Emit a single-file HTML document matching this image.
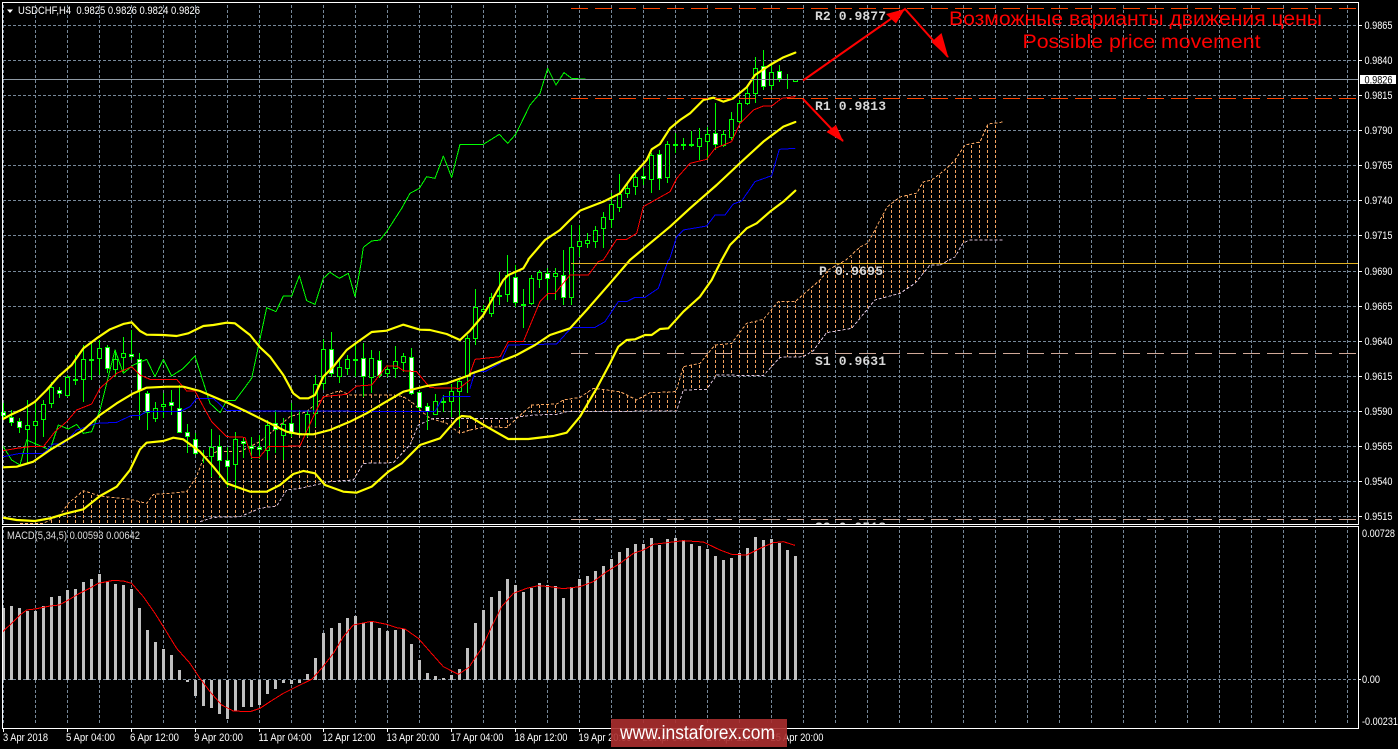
<!DOCTYPE html>
<html><head><meta charset="utf-8"><title>USDCHF,H4</title>
<style>html,body{margin:0;padding:0;background:#000;width:1398px;height:749px;overflow:hidden}svg{display:block}text{font-family:"Liberation Sans",sans-serif}.m{font-family:"Liberation Mono",monospace;font-size:13px;font-weight:bold;fill:#d8d8d8}.a{font-size:11px;fill:#fff}</style></head>
<body>
<svg width="1398" height="749" viewBox="0 0 1398 749" xmlns="http://www.w3.org/2000/svg">
<defs>
<pattern id="vg" width="32" height="5" patternUnits="userSpaceOnUse"><rect x="3" width="1" height="3" fill="#778899"/></pattern>
<pattern id="ht" width="8" height="5" patternUnits="userSpaceOnUse"><rect x="3" width="1" height="3" fill="#f4a460"/></pattern>
<clipPath id="cloud">
<polygon transform="translate(0 260) scale(.33333)" points="60,790 130,790 180,765 205,730 250,692 300,708 390,718 440,730 460,703 510,700 560,695 590,650 610,595 650,575 720,575 780,545 810,520 870,470 920,455 980,405 1020,392 1050,405 1100,405 1180,405 1210,410 1240,430 1260,450 1290,475 1340,490 1380,520 1410,510 1410,475 1360,475 1300,475 1255,495 1230,555 1180,608 1090,610 1060,660 990,665 900,685 860,690 830,738 780,745 720,770 640,772 600,785 560,800 60,800"/>
<polygon transform="translate(470 260) scale(.33333)" points="0,510 50,500 110,503 135,480 185,435 260,432 280,420 330,412 370,385 450,395 500,420 540,398 618,395 640,320 690,310 735,255 785,250 830,190 880,178 925,125 975,125 1050,60 1075,30 1130,10 1410,10 1410,15 1380,15 1335,70 1290,100 1215,120 1145,205 1070,218 1030,272 1000,290 930,292 880,347 740,345 710,388 640,390 620,453 290,455 260,463 190,465 150,470 120,475 0,475"/>
<polygon points="846,263 860,247 868,243 887,207 900,197 917,193 923,182 932,180 947,168 955,160 965,145 980,142 988,124 1003,122 1003,240 970,240 963,243 955,257 940,265 846,265"/>
</clipPath>
<clipPath id="mainclip"><rect x="3" y="3" width="1355" height="521"/></clipPath>
</defs>
<rect width="1398" height="749" fill="#000"/>
<rect x="3" y="3" width="1355" height="521" fill="url(#vg)"/>
<rect x="3" y="527" width="1355" height="198" fill="url(#vg)"/>
<g stroke="#778899" stroke-width="1" stroke-dasharray="3 2" fill="none" shape-rendering="crispEdges">
<path d="M3 25.5H1358M3 60.5H1358M3 95.5H1358M3 130.5H1358M3 165.5H1358M3 200.5H1358M3 235.5H1358M3 271.5H1358M3 306.5H1358M3 341.5H1358M3 376.5H1358M3 411.5H1358M3 446.5H1358M3 481.5H1358M3 516.5H1358M3 679.5H1358"/>
</g>
<rect x="0" y="3" width="1010" height="521" fill="url(#ht)" clip-path="url(#cloud)"/>
<g fill="none" stroke-width="3" stroke-dasharray="9 6" clip-path="url(#mainclip)" shape-rendering="crispEdges">
<g transform="translate(0 260) scale(.33333)">
<polyline stroke="#f4a460" points="60,790 130,790 180,765 205,730 250,692 300,708 390,718 440,730 460,703 510,700 560,695 590,650 610,595 650,575 720,575 780,545 810,520 870,470 920,455 980,405 1020,392 1050,405 1100,405 1180,405 1210,410 1240,430 1260,450 1290,475 1340,490 1380,520 1410,510"/>
<polyline stroke="#d8bfd8" points="600,785 640,772 720,770 780,745 830,738 860,690 900,685 990,665 1060,660 1090,610 1180,608 1230,555 1255,495 1300,475 1360,475 1410,475"/>
</g>
<g transform="translate(470 260) scale(.33333)">
<polyline stroke="#f4a460" points="0,510 50,500 110,503 135,480 185,435 260,432 280,420 330,412 370,385 450,395 500,420 540,398 618,395 640,320 690,310 735,255 785,250 830,190 880,178 925,125 975,125 1050,60 1075,30"/>
<polyline stroke="#d8bfd8" points="0,475 120,475 150,470 190,465 260,463 290,455 620,453 640,390 710,388 740,345 880,347 930,292 1000,290 1030,272 1070,218 1145,205 1215,120 1290,100 1335,70 1380,15 1410,15"/>
</g>
<polyline stroke-width="1" stroke-dasharray="3 2" stroke="#f4a460" points="828,270 846,260 860,247 868,243 887,207 900,197 917,193 923,182 932,180 947,168 955,160 965,145 980,142 988,124 1003,122"/>
<polyline stroke-width="1" stroke-dasharray="3 2" stroke="#d8bfd8" points="940,265 955,257 963,243 970,240 1003,240"/>
</g>
<path fill="none" stroke="#00ff00" stroke-width="1" d="M3.5 403V420M11.5 410V426M19.5 418V433M27.5 400V463M35.5 403V445M43.5 400V437M51.5 382V408M59.5 387V398M67.5 375V397M75.5 355V385M83.5 345V402M91.5 343V380M99.5 340V375M107.5 345V373M115.5 350V377M123.5 337V372M131.5 330V360M139.5 353V420M147.5 391V430M155.5 402V422M163.5 393V418M171.5 390V415M179.5 385V433M187.5 424V453M195.5 433V455M203.5 450V463M211.5 429V477M219.5 435V478M227.5 447V487M235.5 432V490M243.5 437V458M251.5 437V459M259.5 435V459M267.5 420V460M275.5 410V453M283.5 418V460M291.5 403V437M299.5 410V435M307.5 410V437M315.5 375V427M323.5 339V390M331.5 332V377M339.5 358V383M347.5 355V375M355.5 343V377M363.5 343V397M371.5 350V393M379.5 351V378M387.5 365V377M395.5 346V378M403.5 353V372M411.5 348V395M419.5 391V410M427.5 403V430M435.5 394V415M443.5 395V412M451.5 384V417M459.5 380V427M467.5 335V393M475.5 289V345M483.5 305V315M491.5 293V317M499.5 272V305M507.5 255V302M515.5 265V307M523.5 289V328M531.5 275V305M539.5 270V288M547.5 268V300M555.5 268V300M563.5 250V305M571.5 225V305M579.5 225V257M587.5 233V248M595.5 226V248M603.5 212V248M611.5 193V228M619.5 174V212M627.5 183V198M635.5 170V195M643.5 168V185M651.5 153V193M659.5 150V190M667.5 141V183M675.5 133V153M683.5 138V150M691.5 131V147M699.5 128V160M707.5 127V160M715.5 103V150M723.5 130V147M731.5 112V140M739.5 100V125M747.5 88V105M755.5 57V103M763.5 50V90M771.5 65V90M779.5 65V82M787.5 74V89M795.5 79V82"/>
<path fill="#000" stroke="#00ff00" stroke-width="1" d="M25.5 425.5h4v4h-4zM33.5 421.5h4v4h-4zM41.5 404.5h4v15h-4zM49.5 387.5h4v16h-4zM65.5 377.5h4v18h-4zM73.5 379.5h4v1h-4zM81.5 359.5h4v20h-4zM89.5 359.5h4v1h-4zM97.5 348.5h4v10h-4zM113.5 359.5h4v10h-4zM121.5 353.5h4v4h-4zM153.5 408.5h4v10h-4zM161.5 404.5h4v2h-4zM209.5 447.5h4v9h-4zM233.5 439.5h4v25h-4zM265.5 425.5h4v25h-4zM281.5 424.5h4v11h-4zM297.5 433.5h4v1h-4zM305.5 414.5h4v19h-4zM313.5 384.5h4v29h-4zM321.5 349.5h4v34h-4zM337.5 367.5h4v9h-4zM345.5 359.5h4v9h-4zM353.5 359.5h4v1h-4zM369.5 358.5h4v19h-4zM385.5 369.5h4v4h-4zM393.5 361.5h4v7h-4zM401.5 356.5h4v6h-4zM433.5 401.5h4v13h-4zM441.5 401.5h4v1h-4zM449.5 391.5h4v10h-4zM457.5 381.5h4v10h-4zM465.5 338.5h4v37h-4zM473.5 307.5h4v31h-4zM481.5 309.5h4v2h-4zM489.5 297.5h4v16h-4zM497.5 295.5h4v1h-4zM505.5 275.5h4v19h-4zM521.5 304.5h4v1h-4zM529.5 278.5h4v25h-4zM537.5 272.5h4v7h-4zM553.5 273.5h4v3h-4zM569.5 247.5h4v50h-4zM577.5 241.5h4v5h-4zM585.5 240.5h4v3h-4zM593.5 230.5h4v11h-4zM601.5 217.5h4v11h-4zM609.5 204.5h4v15h-4zM617.5 194.5h4v13h-4zM625.5 188.5h4v5h-4zM633.5 177.5h4v9h-4zM649.5 155.5h4v24h-4zM665.5 144.5h4v33h-4zM673.5 144.5h4v1h-4zM681.5 144.5h4v1h-4zM689.5 144.5h4v1h-4zM697.5 138.5h4v8h-4zM705.5 134.5h4v7h-4zM721.5 134.5h4v11h-4zM729.5 119.5h4v18h-4zM737.5 103.5h4v18h-4zM745.5 93.5h4v10h-4zM753.5 68.5h4v25h-4zM769.5 72.5h4v13h-4zM793.5 79.5h4v2h-4z"/>
<path fill="#fff" stroke="#00ff00" stroke-width="1" d="M1.5 412.5h4v3h-4zM9.5 417.5h4v5h-4zM17.5 421.5h4v6h-4zM57.5 390.5h4v3h-4zM105.5 347.5h4v21h-4zM129.5 354.5h4v2h-4zM137.5 359.5h4v31h-4zM145.5 393.5h4v19h-4zM169.5 402.5h4v3h-4zM177.5 408.5h4v24h-4zM185.5 432.5h4v4h-4zM193.5 439.5h4v14h-4zM217.5 446.5h4v14h-4zM225.5 460.5h4v6h-4zM241.5 441.5h4v2h-4zM249.5 446.5h4v2h-4zM257.5 447.5h4v2h-4zM273.5 423.5h4v6h-4zM289.5 423.5h4v10h-4zM329.5 349.5h4v24h-4zM361.5 358.5h4v18h-4zM377.5 360.5h4v15h-4zM409.5 357.5h4v36h-4zM417.5 392.5h4v15h-4zM425.5 406.5h4v5h-4zM513.5 277.5h4v25h-4zM545.5 273.5h4v5h-4zM561.5 275.5h4v22h-4zM641.5 176.5h4v2h-4zM657.5 154.5h4v24h-4zM713.5 133.5h4v11h-4zM761.5 66.5h4v20h-4zM777.5 71.5h4v7h-4z"/>
<g stroke-linejoin="round" stroke-linecap="round" fill="none">
<g transform="translate(0 260) scale(.33333)" stroke-width="3" shape-rendering="crispEdges">
<polyline stroke="#00ff00" points="10,560 35,600 60,615 80,540 150,570 175,495 205,507 230,493 250,520 275,515 300,450 345,270 370,340 400,315 440,298 465,350 490,298 515,348 550,325 585,288 630,430 660,458 680,422 705,422 755,355 800,143 828,155 850,108 875,108 898,47 920,122 945,133 970,55 990,37 1018,55 1045,40 1065,110 1085,0"/>
<polyline stroke="#0000ff" points="10,590 60,580 130,580 160,552 190,552 230,510 290,490 350,487 395,466 420,466 440,455 540,455 570,440 590,415 640,415 680,452 1305,455 1330,410 1410,410"/>
<polyline stroke="#ff0000" points="10,572 50,565 90,560 130,560 165,515 200,485 230,450 275,432 300,385 350,340 395,320 420,345 450,358 530,358 560,393 585,393 610,440 635,485 680,530 735,532 755,592 778,592 805,560 900,558 940,470 970,410 1040,403 1070,378 1115,375 1160,318 1190,318 1210,332 1250,335 1290,383 1378,385 1410,360"/>
<g stroke="#ffff00" stroke-width="6.5" shape-rendering="auto">
<polyline points="9,477 35,463 70,447 105,425 140,390 175,350 215,315 250,265 290,235 330,208 370,192 395,187 420,213 440,224 490,225 530,228 565,220 610,198 640,195 680,188 705,190 750,225 780,262 810,290 850,345 880,400 900,415 925,415 945,405 970,350 1000,320 1040,270 1070,248 1115,216 1160,212 1210,194 1260,209 1290,210 1340,222 1380,240 1410,212"/>
<polyline points="9,622 50,620 100,605 150,570 200,540 250,510 300,465 350,430 400,400 440,383 500,380 550,380 600,393 680,427 740,455 800,485 860,515 900,523 940,523 990,510 1050,485 1100,460 1150,430 1210,395 1280,378 1340,370 1410,345"/>
<polyline points="9,773 50,780 105,783 150,775 200,760 250,748 300,708 350,680 390,630 420,568 440,548 490,543 520,533 550,538 600,575 640,620 680,670 750,695 800,695 840,675 880,642 910,633 945,640 975,675 1030,695 1070,698 1115,680 1165,635 1205,610 1260,555 1320,535 1370,478 1385,468 1410,470"/>
</g></g>
<g transform="translate(470 260) scale(.33333)" stroke-width="3" shape-rendering="crispEdges">
<polyline stroke="#0000ff" points="0,385 15,335 45,335 90,310 115,255 260,252 305,202 375,202 405,185 445,125 470,125 495,112 525,112 565,85 595,0"/>
<polyline stroke="#ff0000" points="0,340 15,298 90,290 115,245 160,245 210,125 235,100 255,100 300,45 355,45 385,5 400,0"/>
<g stroke="#ffff00" stroke-width="6.5" shape-rendering="auto">
<polyline points="0,212 40,165 100,60 115,45 160,25 175,0"/>
<polyline points="0,342 40,328 90,305 140,285 195,255 240,225 300,205 350,150 420,70 480,0"/>
<polyline points="0,470 50,500 115,537 175,537 250,528 290,518 330,470 380,385 420,310 445,260 470,240 495,238 525,225 545,225 570,207 595,205 640,155 690,110 725,60 745,20 755,0"/>
</g></g>
<g transform="scale(.33333)" stroke-width="3" shape-rendering="crispEdges">
<polyline stroke="#00ff00" points="1085,775 1090,742 1115,723 1140,720 1160,695 1205,625 1230,580 1258,565 1280,530 1305,535 1330,468 1355,532 1380,433 1410,433"/>
</g>
<g transform="translate(470 0) scale(.33333)" stroke-width="3" shape-rendering="crispEdges">
<polyline stroke="#00ff00" points="0,433 40,433 88,403 113,430 137,403 180,315 210,280 233,205 258,255 282,218 305,235 350,238"/>
<polyline stroke="#0000ff" points="598,780 620,710 640,690 710,678 735,645 765,645 790,612 815,603 855,545 905,527 928,448 975,445"/>
<polyline stroke="#ff0000" points="400,780 440,718 470,718 500,700 520,620 600,575 620,535 660,490 710,478 735,445 785,425 810,370 850,330 880,318 905,318 935,295 975,290"/>
<g stroke="#ffff00" stroke-width="6.5" shape-rendering="auto">
<polyline points="175,778 225,720 270,690 300,660 330,632 400,605 450,580 490,525 530,480 545,448 570,432 600,385 630,360 660,340 700,300 730,293 760,305 790,295 830,262 855,225 900,195 940,172 976,158"/>
<polyline points="480,780 540,730 600,680 660,625 740,555 820,480 880,425 940,380 976,366"/>
<polyline points="755,780 780,735 830,685 860,670 900,635 940,605 976,572"/>
</g></g>
</g>
<g fill="none" stroke-width="1" shape-rendering="crispEdges">
<path d="M3 79.5H1358" stroke="#8f9aa5"/>
<path d="M571 8.5H1356M571 98.5H1356" stroke="#ff4500" stroke-dasharray="17 7"/>
<path d="M571 263.5H1358" stroke="#e0b020"/>
<path d="M571 353.5H1356M571 519.5H1356" stroke="#d0a898" stroke-dasharray="17 7"/>
</g>
<g fill="none" stroke="#f00" stroke-width="2">
<path d="M803 80.5L905 9L948 57M803 99L843 141"/>
</g>
<g fill="#f00">
<polygon points="905,9 886,14 896,23.5"/>
<polygon points="948.5,58 931.5,42 941.5,33"/>
<polygon points="843.5,142 826.5,132 836,125"/>
</g>
<text class="m" x="815" y="20" xml:space="preserve" textLength="71">R2 0.9877</text>
<text class="m" x="815" y="110" xml:space="preserve" textLength="71">R1 0.9813</text>
<text class="m" x="819" y="275" xml:space="preserve" textLength="64">P 0.9695</text>
<text class="m" x="815" y="365" xml:space="preserve" textLength="71">S1 0.9631</text>
<text class="m" x="815" y="531" xml:space="preserve" textLength="71" clip-path="url(#mainclip)">S2 0.9518</text>
<text x="949" y="25" font-size="19" fill="#f00" textLength="373" lengthAdjust="spacingAndGlyphs" style='font-family:"Liberation Sans","DejaVu Sans",sans-serif'>Возможные варианты движения цены</text>
<text x="1022.5" y="48" font-size="19" fill="#f00" textLength="238" lengthAdjust="spacingAndGlyphs">Possible price movement</text>
<path fill="none" stroke="#c0c0c0" stroke-width="3" d="M3.5 608V680M11.5 606V680M19.5 608V680M27.5 611V680M35.5 611V680M43.5 606V680M51.5 597V680M59.5 596V680M67.5 590V680M75.5 589V680M83.5 582V680M91.5 579V680M99.5 574V680M107.5 582V680M115.5 584V680M123.5 585V680M131.5 589V680M139.5 608V680M147.5 630V680M155.5 642V680M163.5 649V680M171.5 655V680M179.5 670V680M187.5 682V680M195.5 696V680M203.5 706V680M211.5 708V680M219.5 714V680M227.5 719V680M235.5 711V680M243.5 707V680M251.5 707V680M259.5 705V680M267.5 694V680M275.5 689V680M283.5 683V680M291.5 684V680M299.5 683V680M307.5 674V680M315.5 658V680M323.5 633V680M331.5 628V680M339.5 623V680M347.5 618V680M355.5 616V680M363.5 623V680M371.5 622V680M379.5 628V680M387.5 631V680M395.5 630V680M403.5 629V680M411.5 644V680M419.5 660V680M427.5 673V680M435.5 676V680M443.5 678V680M451.5 675V680M459.5 669V680M467.5 648V680M475.5 623V680M483.5 610V680M491.5 597V680M499.5 591V680M507.5 579V680M515.5 585V680M523.5 592V680M531.5 588V680M539.5 583V680M547.5 585V680M555.5 586V680M563.5 598V680M571.5 587V680M579.5 579V680M587.5 576V680M595.5 571V680M603.5 566V680M611.5 559V680M619.5 552V680M627.5 548V680M635.5 544V680M643.5 544V680M651.5 538V680M659.5 545V680M667.5 539V680M675.5 538V680M683.5 540V680M691.5 544V680M699.5 546V680M707.5 549V680M715.5 556V680M723.5 560V680M731.5 558V680M739.5 553V680M747.5 548V680M755.5 537V680M763.5 540V680M771.5 539V680M779.5 543V680M787.5 550V680M795.5 556V680"/>
<g fill="none" stroke="#f00" stroke-width="3" stroke-linejoin="round" shape-rendering="crispEdges">
<polyline transform="translate(0 520) scale(.33333)" points="8,335 35,310 60,285 80,270 105,267 150,258 178,255 205,240 235,222 265,207 295,190 340,181 370,183 395,190 430,230 465,280 490,320 530,385 570,430 600,475 630,515 665,555 700,573 750,575 780,565 810,545 850,520 890,500 935,478 965,445 1000,400 1030,350 1060,315 1115,304 1160,313 1190,323 1215,327 1255,355 1290,395 1330,440 1375,463 1410,440"/>
<polyline transform="translate(470 520) scale(.33333)" points="0,437 35,385 65,320 95,260 130,220 170,205 205,197 240,200 280,206 330,200 370,185 410,155 450,130 490,100 520,90 550,73 600,67 640,62 700,66 750,90 785,103 830,105 870,85 910,68 940,65 975,76"/>
</g>
<g fill="none" stroke="#fff" stroke-width="1" shape-rendering="crispEdges">
<rect x="2.5" y="2.5" width="1356" height="522"/>
<rect x="2.5" y="526.5" width="1356" height="202"/>
<path d="M1358 25.5h4M1358 60.5h4M1358 95.5h4M1358 130.5h4M1358 165.5h4M1358 200.5h4M1358 235.5h4M1358 271.5h4M1358 306.5h4M1358 341.5h4M1358 376.5h4M1358 411.5h4M1358 446.5h4M1358 481.5h4M1358 516.5h4M1358 679.5h3M3.5 728v4M67.5 728v4M131.5 728v4M195.5 728v4M259.5 728v4M323.5 728v4M387.5 728v4M451.5 728v4M515.5 728v4M579.5 728v4M643.5 728v4M707.5 728v4M771.5 728v4"/>
</g>
<polygon points="7,9.5 13,9.5 10,13" fill="#fff"/>
<text class="a" x="18" y="14" xml:space="preserve" textLength="182" lengthAdjust="spacingAndGlyphs">USDCHF,H4  0.9825 0.9826 0.9824 0.9826</text>
<text class="a" x="7" y="539" textLength="133" lengthAdjust="spacingAndGlyphs" style="fill:#ddd">MACD(5,34,5) 0.00593 0.00642</text>
<g>
<text class="a" x="1364.5" y="29" textLength="28" lengthAdjust="spacingAndGlyphs">0.9865</text>
<text class="a" x="1364.5" y="64" textLength="28" lengthAdjust="spacingAndGlyphs">0.9840</text>
<text class="a" x="1364.5" y="99" textLength="28" lengthAdjust="spacingAndGlyphs">0.9815</text>
<text class="a" x="1364.5" y="134" textLength="28" lengthAdjust="spacingAndGlyphs">0.9790</text>
<text class="a" x="1364.5" y="169" textLength="28" lengthAdjust="spacingAndGlyphs">0.9765</text>
<text class="a" x="1364.5" y="204" textLength="28" lengthAdjust="spacingAndGlyphs">0.9740</text>
<text class="a" x="1364.5" y="239" textLength="28" lengthAdjust="spacingAndGlyphs">0.9715</text>
<text class="a" x="1364.5" y="275" textLength="28" lengthAdjust="spacingAndGlyphs">0.9690</text>
<text class="a" x="1364.5" y="310" textLength="28" lengthAdjust="spacingAndGlyphs">0.9665</text>
<text class="a" x="1364.5" y="345" textLength="28" lengthAdjust="spacingAndGlyphs">0.9640</text>
<text class="a" x="1364.5" y="380" textLength="28" lengthAdjust="spacingAndGlyphs">0.9615</text>
<text class="a" x="1364.5" y="415" textLength="28" lengthAdjust="spacingAndGlyphs">0.9590</text>
<text class="a" x="1364.5" y="450" textLength="28" lengthAdjust="spacingAndGlyphs">0.9565</text>
<text class="a" x="1364.5" y="485" textLength="28" lengthAdjust="spacingAndGlyphs">0.9540</text>
<text class="a" x="1364.5" y="520" textLength="28" lengthAdjust="spacingAndGlyphs">0.9515</text>
<rect x="1360" y="75" width="36" height="9" fill="#fff"/>
<text class="a" x="1364.5" y="83.5" textLength="28" lengthAdjust="spacingAndGlyphs" style="fill:#000">0.9826</text>
<text class="a" x="1362" y="537" textLength="33" lengthAdjust="spacingAndGlyphs">0.00728</text>
<text class="a" x="1362" y="683" textLength="18" lengthAdjust="spacingAndGlyphs">0.00</text>
<text class="a" x="1362" y="725" textLength="36" lengthAdjust="spacingAndGlyphs">-0.00231</text>
</g>
<g>
<text class="a" x="3" y="741" textLength="45" lengthAdjust="spacingAndGlyphs">3 Apr 2018</text>
<text class="a" x="66" y="741" textLength="49" lengthAdjust="spacingAndGlyphs">5 Apr 04:00</text>
<text class="a" x="130" y="741" textLength="49" lengthAdjust="spacingAndGlyphs">6 Apr 12:00</text>
<text class="a" x="194" y="741" textLength="49" lengthAdjust="spacingAndGlyphs">9 Apr 20:00</text>
<text class="a" x="258.5" y="741" textLength="53" lengthAdjust="spacingAndGlyphs">11 Apr 04:00</text>
<text class="a" x="322.5" y="741" textLength="53" lengthAdjust="spacingAndGlyphs">12 Apr 12:00</text>
<text class="a" x="386.5" y="741" textLength="53" lengthAdjust="spacingAndGlyphs">13 Apr 20:00</text>
<text class="a" x="450.5" y="741" textLength="53" lengthAdjust="spacingAndGlyphs">17 Apr 04:00</text>
<text class="a" x="514.5" y="741" textLength="53" lengthAdjust="spacingAndGlyphs">18 Apr 12:00</text>
<text class="a" x="578.5" y="741" textLength="53" lengthAdjust="spacingAndGlyphs">19 Apr 20:00</text>
<text class="a" x="642.5" y="741" textLength="53" lengthAdjust="spacingAndGlyphs">23 Apr 04:00</text>
<text class="a" x="706.5" y="741" textLength="53" lengthAdjust="spacingAndGlyphs">24 Apr 12:00</text>
<text class="a" x="770.5" y="741" textLength="53" lengthAdjust="spacingAndGlyphs">25 Apr 20:00</text>
</g>
<rect x="611" y="719" width="176" height="28" fill="#ab2f2f" fill-opacity=".9"/>
<text x="620" y="739" font-size="19" fill="#fff" textLength="155" lengthAdjust="spacingAndGlyphs">www.instaforex.com</text>
</svg>
</body></html>
